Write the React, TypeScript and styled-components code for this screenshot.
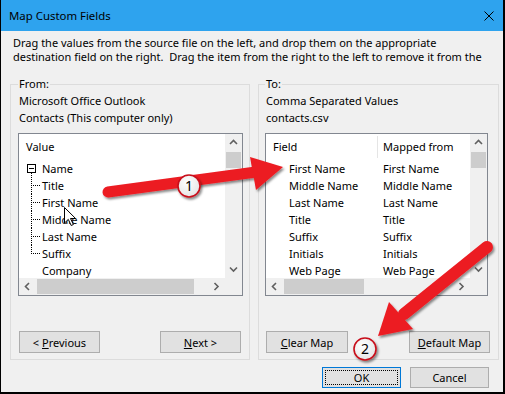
import React from "react";
import styled, { createGlobalStyle } from "styled-components";

const FONT = `"Noto Sans", "Open Sans", Arial, sans-serif`;

const GlobalStyle = createGlobalStyle`
  html, body { margin: 0; padding: 0; background: #f0f0f0; }
  body { font-family: ${FONT}; }
`;

const Window = styled.div`
  position: relative;
  width: 505px;
  height: 394px;
  box-sizing: border-box;
  border-left: 1px solid #000;
  border-right: 2px solid #000;
  border-bottom: 2px solid #000;
  background: #f0f0f0;
  display: flex;
  flex-direction: column;
  font-family: ${FONT};
  font-size: 11px;
  color: #000;
  overflow: hidden;
`;

const TitleBar = styled.div`
  flex: none;
  height: 31px;
  background: #2ea3ee;
  display: flex;
  align-items: center;
  justify-content: space-between;
  padding: 0 9px 0 8px;
`;

const Title = styled.span`
  font-size: 11.4px;
`;

const Description = styled.div`
  margin-top: 5px;
  padding: 0 12px;
  line-height: 14px;
  white-space: nowrap;
`;

const Panels = styled.div`
  display: flex;
  gap: 8px;
  margin-top: 13px;
  padding: 0 4px 0 9px;
`;

const Group = styled.fieldset<{ $w: number; $pl: number; $pr: number }>`
  margin: 0;
  min-width: 0;
  width: ${(p) => p.$w}px;
  box-sizing: border-box;
  border: 1px solid #dcdcdc;
  padding: 1px ${(p) => p.$pr}px 6px ${(p) => p.$pl}px;
  display: flex;
  flex-direction: column;
`;

const Legend = styled.legend`
  padding: 0 1px;
  line-height: 14px;
`;

const InfoLine = styled.div`
  line-height: 17px;
  padding-left: 1px;
  white-space: nowrap;
`;

const ListBox = styled.div<{ $w: number }>`
  width: ${(p) => p.$w}px;
  height: 163px;
  box-sizing: border-box;
  margin-top: 7px;
  border: 1px solid #828790;
  background: #fff;
  display: grid;
  grid-template-columns: 1fr 17px;
  grid-template-rows: 1fr 17px;
`;

const Viewport = styled.div`
  min-width: 0;
  min-height: 0;
  overflow: hidden;
`;

const VScroll = styled.div`
  background: #f0f0f0;
  display: flex;
  flex-direction: column;
`;

const HScroll = styled.div`
  background: #f0f0f0;
  display: flex;
  align-items: center;
`;

const Corner = styled.div`
  background: #f0f0f0;
`;

const ArrowBtn = styled.div`
  flex: none;
  width: 17px;
  height: 17px;
  display: flex;
  align-items: center;
  justify-content: center;
`;

const Track = styled.div`
  flex: 1;
  display: flex;
`;

const VTrack = styled(Track)`
  flex-direction: column;
`;

const VThumb = styled.div`
  margin: 1px 1px 0;
  height: 16px;
  background: #cdcdcd;
`;

const HThumb = styled.div<{ $w: number }>`
  margin-left: 1px;
  width: ${(p) => p.$w}px;
  height: 15px;
  background: #cdcdcd;
`;

const ListHeader = styled.div`
  height: 26px;
  display: flex;
  align-items: center;
`;

const HeaderCell = styled.div<{ $w?: number; $pl: number; $divider?: boolean }>`
  flex: ${(p) => (p.$w ? "none" : "1")};
  width: ${(p) => (p.$w ? `${p.$w}px` : "auto")};
  box-sizing: border-box;
  height: 22px;
  line-height: 22px;
  padding-left: ${(p) => p.$pl}px;
  border-right: ${(p) => (p.$divider ? "1px solid #e5e5e5" : "none")};
  white-space: nowrap;
`;

const Row = styled.div`
  height: 17px;
  display: flex;
  align-items: center;
  white-space: nowrap;
`;

const Cell = styled.div<{ $w?: number; $pl: number }>`
  flex: none;
  width: ${(p) => (p.$w ? `${p.$w}px` : "auto")};
  box-sizing: border-box;
  padding-left: ${(p) => p.$pl}px;
`;

const NodeCell = styled.span`
  flex: none;
  width: 9px;
  height: 17px;
  margin: 0 6px 0 8px;
  display: flex;
  flex-direction: column;
  padding-top: 4px;
  box-sizing: border-box;
  background: repeating-linear-gradient(to bottom, #000 0 1px, transparent 1px 2px) 4px 13px / 1px 4px no-repeat;
`;

const Connector = styled.span<{ $last?: boolean }>`
  flex: none;
  width: 11px;
  height: 17px;
  margin-left: 12px;
  background:
    repeating-linear-gradient(to bottom, #000 0 1px, transparent 1px 2px) 0 0 / 1px ${(p) => (p.$last ? "9px" : "100%")} no-repeat,
    repeating-linear-gradient(to right, #000 0 1px, transparent 1px 2px) 0 8px / 9px 1px no-repeat;
`;

const PlainItem = styled.span`
  padding-left: 23px;
`;

const ButtonRow = styled.div<{ $pl: number; $pr: number }>`
  margin-top: 35px;
  display: flex;
  justify-content: space-between;
  padding: 0 ${(p) => p.$pr}px 0 ${(p) => p.$pl}px;
`;

const Button = styled.button<{ $w: number; $h: number; $default?: boolean }>`
  width: ${(p) => p.$w}px;
  height: ${(p) => p.$h}px;
  box-sizing: border-box;
  margin: 0;
  padding: 0;
  font-family: ${FONT};
  font-size: 11px;
  color: #000;
  background: #e1e1e1;
  border: 1px solid ${(p) => (p.$default ? "#0078d7" : "#adadad")};
  outline: ${(p) => (p.$default ? "1px dotted #000" : "none")};
  outline-offset: -4px;
  line-height: 1;
`;

const Footer = styled.div`
  margin-top: 7px;
  display: flex;
  justify-content: flex-end;
  gap: 9px;
  padding-right: 14px;
`;

const Overlay = styled.svg`
  position: absolute;
  top: 0;
  left: -1px;
  pointer-events: none;
`;

const Badge = styled.text`
  font-family: ${FONT};
  font-size: 14px;
`;

const Chevron = ({ dir }: { dir: "up" | "down" | "left" | "right" }) => {
  const d = {
    up: "M1 5 L4.5 1.5 L8 5",
    down: "M1 1.5 L4.5 5 L8 1.5",
    left: "M5 1 L1.5 4.5 L5 8",
    right: "M1.5 1 L5 4.5 L1.5 8",
  }[dir];
  const vertical = dir === "up" || dir === "down";
  return (
    <svg width={vertical ? 9 : 7} height={vertical ? 7 : 9} viewBox={vertical ? "0 0 9 7" : "0 0 7 9"}>
      <path d={d} fill="none" stroke="#606060" strokeWidth="1.6" />
    </svg>
  );
};

const Scrollbars = ({ thumb }: { thumb: number }) => (
  <>
    <VScroll>
      <ArrowBtn>
        <Chevron dir="up" />
      </ArrowBtn>
      <VTrack>
        <VThumb />
      </VTrack>
      <ArrowBtn>
        <Chevron dir="down" />
      </ArrowBtn>
    </VScroll>
    <HScroll>
      <ArrowBtn>
        <Chevron dir="left" />
      </ArrowBtn>
      <Track>
        <HThumb $w={thumb} />
      </Track>
      <ArrowBtn>
        <Chevron dir="right" />
      </ArrowBtn>
    </HScroll>
    <Corner />
  </>
);

const children = ["Title", "First Name", "Middle Name", "Last Name", "Suffix"];
const mapped = ["First Name", "Middle Name", "Last Name", "Title", "Suffix", "Initials", "Web Page"];

export default function App() {
  return (
    <>
      <GlobalStyle />
      <Window>
        <TitleBar>
          <Title>Map Custom Fields</Title>
          <svg width="10" height="10" viewBox="0 0 10 10">
            <path d="M0.5 0.5 L9.5 9.5 M9.5 0.5 L0.5 9.5" stroke="#000" strokeWidth="1" />
          </svg>
        </TitleBar>
        <Description>
          Drag the values from the source file on the left, and drop them on the appropriate
          <br />
          destination field on the right.&nbsp; Drag the item from the right to the left to remove it from the
        </Description>
        <Panels>
          <Group $w={240} $pl={7} $pr={6}>
            <Legend>From:</Legend>
            <InfoLine>Microsoft Office Outlook</InfoLine>
            <InfoLine>Contacts (This computer only)</InfoLine>
            <ListBox $w={225}>
              <Viewport>
                <ListHeader>
                  <HeaderCell $pl={7}>Value</HeaderCell>
                </ListHeader>
                <Row>
                  <NodeCell>
                    <svg width="9" height="9" viewBox="0 0 9 9">
                      <rect x="0.5" y="0.5" width="8" height="8" fill="#fff" stroke="#000" />
                      <path d="M2 4.5 H7" stroke="#000" />
                    </svg>
                  </NodeCell>
                  Name
                </Row>
                {children.map((c, i) => (
                  <Row key={c}>
                    <Connector $last={i === children.length - 1} />
                    {c}
                  </Row>
                ))}
                <Row>
                  <PlainItem>Company</PlainItem>
                </Row>
              </Viewport>
              <Scrollbars thumb={157} />
            </ListBox>
            <ButtonRow $pl={1} $pr={2}>
              <Button $w={81} $h={22}>
                &lt; <u>P</u>revious
              </Button>
              <Button $w={81} $h={22}>
                <u>N</u>ext &gt;
              </Button>
            </ButtonRow>
          </Group>
          <Group $w={241} $pl={6} $pr={8}>
            <Legend>To:</Legend>
            <InfoLine>Comma Separated Values</InfoLine>
            <InfoLine>contacts.csv</InfoLine>
            <ListBox $w={223}>
              <Viewport>
                <ListHeader>
                  <HeaderCell $w={112} $pl={7} $divider>
                    Field
                  </HeaderCell>
                  <HeaderCell $pl={5}>Mapped from</HeaderCell>
                </ListHeader>
                {mapped.map((m) => (
                  <Row key={m}>
                    <Cell $w={111} $pl={23}>
                      {m}
                    </Cell>
                    <Cell $pl={6}>{m}</Cell>
                  </Row>
                ))}
              </Viewport>
              <Scrollbars thumb={80} />
            </ListBox>
            <ButtonRow $pl={1} $pr={0}>
              <Button $w={82} $h={22}>
                <u>C</u>lear Map
              </Button>
              <Button $w={81} $h={22}>
                <u>D</u>efault Map
              </Button>
            </ButtonRow>
          </Group>
        </Panels>
        <Footer>
          <Button $w={79} $h={21} $default>
            OK
          </Button>
          <Button $w={79} $h={21}>
            Cancel
          </Button>
        </Footer>
        <Overlay width="505" height="394" viewBox="0 0 505 394">
          <defs>
            <filter id="shadow" x="-20%" y="-20%" width="140%" height="140%">
              <feDropShadow dx="1.5" dy="2" stdDeviation="1.2" floodColor="#000" floodOpacity="0.45" />
            </filter>
            <radialGradient id="badge" cx="40%" cy="35%" r="70%">
              <stop offset="0%" stopColor="#ffffff" />
              <stop offset="100%" stopColor="#e4e4e4" />
            </radialGradient>
          </defs>
          <g filter="url(#shadow)">
            <line x1="108" y1="192" x2="256" y2="172" stroke="#ec1c24" strokeWidth="11" strokeLinecap="round" />
            <polygon points="250,157 283,167 256,190" fill="#ec1c24" />
            <line x1="487" y1="247" x2="404" y2="314" stroke="#ec1c24" strokeWidth="12" strokeLinecap="round" />
            <polygon points="389,302 378,336 413,329" fill="#ec1c24" />
          </g>
          <g filter="url(#shadow)">
            <circle cx="189" cy="186" r="11" fill="url(#badge)" stroke="#c8101a" strokeWidth="1.6" />
            <circle cx="365" cy="349" r="11" fill="url(#badge)" stroke="#c8101a" strokeWidth="1.6" />
          </g>
          <Badge x="189" y="191" textAnchor="middle">1</Badge>
          <Badge x="365" y="354" textAnchor="middle">2</Badge>
          <path
            d="M64.5 207.5 V223 L68.3 219.4 L71.2 225.5 L73.4 224.5 L70.5 218.5 L75.6 218.5 Z"
            fill="#fff"
            stroke="#000"
            strokeWidth="1"
            strokeLinejoin="round"
          />
        </Overlay>
      </Window>
    </>
  );
}
